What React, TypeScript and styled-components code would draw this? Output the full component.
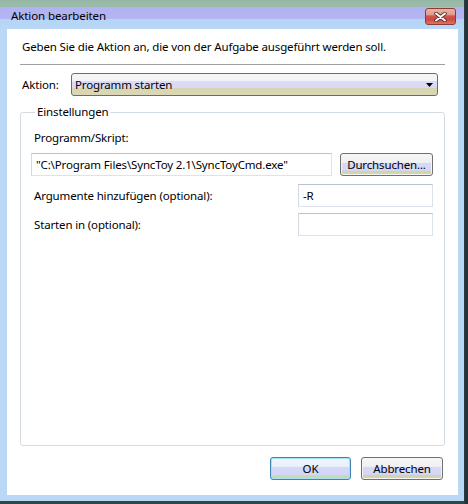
import React from 'react';
import styled, { createGlobalStyle } from 'styled-components';

const GlobalStyle = createGlobalStyle`
  html, body { margin: 0; padding: 0; background: #26323a; overflow: hidden; }
  body { font-family: "Noto Sans", "Open Sans", sans-serif; font-size: 11.5px; letter-spacing: -0.15px; color: #000; }
  #root { width: 468px; height: 504px; }
`;

const Window = styled.div`
  width: 465px;
  height: 504px;
  box-sizing: border-box;
  display: flex;
  flex-direction: column;
  background: #b9d8f6;
  border-right: 1px solid #2a3c44;
  border-bottom: 3px solid #2a4848;
`;

const TitleBar = styled.div`
  height: 29px;
  flex: none;
  box-sizing: border-box;
  display: flex;
  align-items: flex-start;
  padding: 8px 8px 0 11px;
  background: linear-gradient(to bottom, #97b7a6 0, #9cbcac 7px, #b0b3f0 7px, #b3b6f2 19px, #b6d5f6 19px, #b9d8f6 29px);
`;

const Title = styled.span`
  line-height: 16px;
  font-size: 11.5px;
  letter-spacing: -0.1px;
  color: #000;
`;

const CloseButton = styled.div`
  margin-left: auto;
  width: 31px;
  height: 17px;
  box-sizing: border-box;
  border: 1px solid #8c3c34;
  border-radius: 3px;
  background: linear-gradient(to bottom, #eab2a2 0, #e29a8a 40%, #d4564c 45%, #cc4a40 70%, #dc7466 100%);
  display: flex;
  align-items: center;
  justify-content: center;
`;

const Client = styled.div`
  flex: 1;
  margin: 0 6px 6px 7px;
  background: #fff;
  display: flex;
  flex-direction: column;
  padding: 10px 13px 15px 13px;
  box-sizing: border-box;
  min-height: 0;
`;

const Instruction = styled.p`
  margin: 0;
  padding-left: 2px;
  line-height: 16px;
`;

const Separator = styled.div`
  margin-top: 9px;
  height: 1px;
  background: #a0a0a0;
`;

const ActionRow = styled.div`
  margin-top: 8px;
  display: flex;
  align-items: center;
  padding-left: 2px;
  height: 23px;
`;

const ActionLabel = styled.span`
  width: 49px;
  flex: none;
`;

const Combo = styled.div`
  width: 367px;
  height: 23px;
  box-sizing: border-box;
  border: 1px solid #6e6e60;
  border-radius: 3px;
  display: flex;
  align-items: center;
  padding: 0 4px 0 3px;
  background: linear-gradient(to bottom, #f6f6f8 0, #f2f2f6 33%, #dcdcf8 34%, #d9d9f6 68%, #d8d5b2 69%, #d9d7b8 100%);
`;

const ComboText = styled.span`
  flex: 1;
  line-height: 16px;
`;

const Group = styled.fieldset`
  margin: 8px 0 0 0;
  flex: 1;
  border: 1px solid #d3dce3;
  border-radius: 3px;
  padding: 10px 11px 0 10px;
  min-width: 0;
  display: flex;
  flex-direction: column;
`;

const Legend = styled.legend`
  margin-left: 4px;
  padding: 0 2px;
  line-height: 16px;
`;

const FieldLabel = styled.div`
  line-height: 16px;
  padding-left: 3px;
`;

const PathRow = styled.div`
  margin-top: 7px;
  display: flex;
  gap: 8px;
  align-items: center;
`;

const TextBox = styled.input<{ $w: number }>`
  width: ${p => p.$w}px;
  height: 23px;
  box-sizing: border-box;
  margin: 0;
  border: 1px solid;
  border-color: #b9c2cd #dde3ea #dde3ea #d2d9e2;
  padding: 0 4px;
  font: inherit;
  letter-spacing: inherit;
  color: #000;
  background: #fff;
  outline: none;
`;

const OptionRow = styled.div<{ $gap: number }>`
  margin-top: ${p => p.$gap}px;
  display: flex;
  align-items: center;
  justify-content: space-between;
`;

const Button = styled.button<{ $w: number; $default?: boolean }>`
  width: ${p => p.$w}px;
  height: 23px;
  box-sizing: border-box;
  margin: 0;
  padding: 0 0 1px;
  border: 1px solid ${p => (p.$default ? '#3c84b6' : '#707070')};
  border-radius: 3px;
  font: inherit;
  letter-spacing: inherit;
  color: #000;
  background: ${p =>
    p.$default
      ? 'linear-gradient(to bottom, #eef6fb 0, #e8f2fa 40%, #d6d8f8 45%, #d4d6f6 80%, #c6d8b4 85%, #ccdabc 100%)'
      : 'linear-gradient(to bottom, #f6f6f6 0, #f0f0f2 40%, #d8d8f8 45%, #d6d6f6 78%, #d2d4a8 82%, #d4d6ae 100%)'};
  box-shadow: ${p => (p.$default ? 'inset 0 0 0 1px #a8e0f4' : 'inset 0 0 0 1px #f4f4f4')};
`;

const ButtonBar = styled.div`
  margin-top: 11px;
  display: flex;
  justify-content: flex-end;
  gap: 10px;
  padding-right: 2px;
`;

export default function App() {
  return (
    <>
      <GlobalStyle />
      <Window>
        <TitleBar>
          <Title>Aktion bearbeiten</Title>
          <CloseButton>
            <svg width="13" height="10" viewBox="0 0 13 10">
              <path d="M2 1.5 L11 8.5 M11 1.5 L2 8.5" stroke="#5a2a2a" strokeWidth="3.6" strokeLinecap="round" />
              <path d="M2 1.5 L11 8.5 M11 1.5 L2 8.5" stroke="#ffffff" strokeWidth="2" strokeLinecap="round" />
            </svg>
          </CloseButton>
        </TitleBar>
        <Client>
          <Instruction>Geben Sie die Aktion an, die von der Aufgabe ausgeführt werden soll.</Instruction>
          <Separator />
          <ActionRow>
            <ActionLabel>Aktion:</ActionLabel>
            <Combo>
              <ComboText>Programm starten</ComboText>
              <svg width="7" height="4" viewBox="0 0 7 4">
                <path d="M0 0 H7 L3.5 4 Z" fill="#000" />
              </svg>
            </Combo>
          </ActionRow>
          <Group>
            <Legend>Einstellungen</Legend>
            <FieldLabel>Programm/Skript:</FieldLabel>
            <PathRow>
              <TextBox $w={301} readOnly value={'"C:\\Program Files\\SyncToy 2.1\\SyncToyCmd.exe"'} />
              <Button $w={93}>Durchsuchen...</Button>
            </PathRow>
            <OptionRow $gap={8}>
              <FieldLabel>Argumente hinzufügen (optional):</FieldLabel>
              <TextBox $w={135} readOnly value="-R" />
            </OptionRow>
            <OptionRow $gap={6}>
              <FieldLabel>Starten in (optional):</FieldLabel>
              <TextBox $w={135} readOnly value="" />
            </OptionRow>
          </Group>
          <ButtonBar>
            <Button $w={81} $default>OK</Button>
            <Button $w={82}>Abbrechen</Button>
          </ButtonBar>
        </Client>
      </Window>
    </>
  );
}
